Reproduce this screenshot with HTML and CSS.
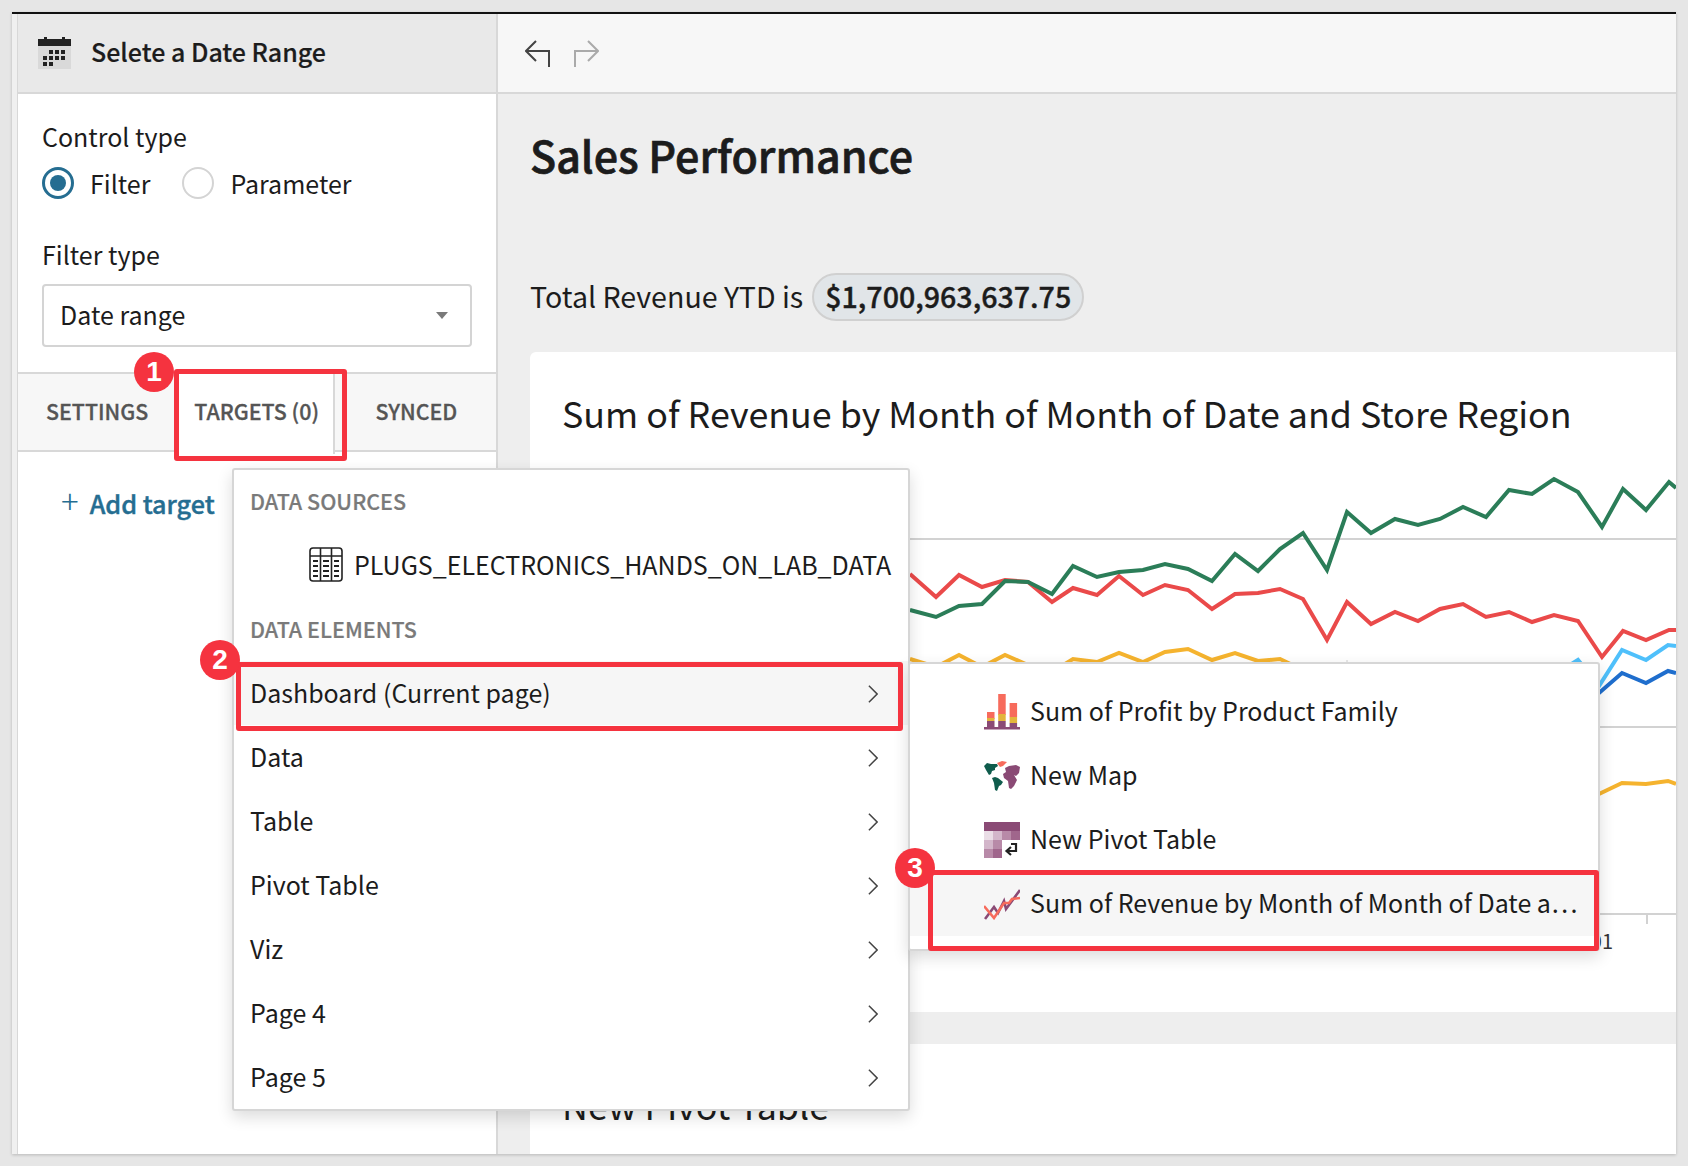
FILE: index.html
```html
<!DOCTYPE html>
<html lang="en">
<head>
    <meta charset="UTF-8">
    <title>Selete a Date Range</title>
    <link rel="stylesheet" href="styles.css">
</head>
<body>
<div class="window">
    <div class="strip"></div>

    <!-- left panel -->
    <div class="sidebar">
        <div class="sideHead">
            <svg class="calIcon" width="33" height="32" viewBox="0 0 33 32">
                <rect x="0" y="8" width="33" height="24" fill="#d9d9d9"/>
                <rect x="0" y="2" width="33" height="7" fill="#222"/>
                <rect x="6" y="0" width="3" height="3" fill="#222"/><rect x="24" y="0" width="3" height="3" fill="#222"/>
                <g fill="#222">
                    <rect x="11" y="13" width="4" height="4"/><rect x="17" y="13" width="4" height="4"/><rect x="23" y="13" width="4" height="4"/>
                    <rect x="5" y="19" width="4" height="4"/><rect x="11" y="19" width="4" height="4"/><rect x="17" y="19" width="4" height="4"/><rect x="23" y="19" width="4" height="4"/>
                    <rect x="5" y="25" width="4" height="4"/><rect x="11" y="25" width="4" height="4"/>
                </g>
            </svg>
            <span>Selete a Date Range</span>
        </div>
        <div class="sideForm">
            <div class="fieldLabel">Control type</div>
            <div class="radios">
                <span class="radio on"></span><span class="radioText">Filter</span>
                <span class="radio"></span><span class="radioText">Parameter</span>
            </div>
            <div class="fieldLabel typeLabel">Filter type</div>
            <div class="select">
                <span class="selectText">Date range</span>
                <span class="caret"></span>
            </div>
        </div>
        <div class="tabs">
            <div class="tab">SETTINGS</div>
            <div class="tab active">TARGETS (0)</div>
            <div class="tab">SYNCED</div>
        </div>
        <div class="addTarget"><span class="plus">+</span>Add target</div>
    </div>

    <!-- dashboard side -->
    <div class="main">
        <div class="toolbar">
            <svg width="26" height="27" viewBox="0 0 26 27" fill="none" stroke="#444" stroke-width="2">
                <path d="M11 1 L1 11 L11 21 M1 11 H24 V27"/>
            </svg>
            <svg width="26" height="27" viewBox="0 0 26 27" fill="none" stroke="#aaa" stroke-width="2">
                <path d="M15 1 L25 11 L15 21 M25 11 H2 V27"/>
            </svg>
        </div>
        <div class="canvas">
            <h1 class="pageTitle">Sales Performance</h1>
            <div class="kpi"><span class="kpiText">Total Revenue YTD is</span> <span class="pill">$1,700,963,637.75</span></div>
            <div class="card chartCard">
                <div class="cardTitle">Sum of Revenue by Month of Month of Date and Store Region</div>
                <svg class="chart" width="1146" height="520" viewBox="530 450 1146 520">
                    <g stroke="#d2d2d2" stroke-width="2">
                        <line x1="563" y1="539" x2="1676" y2="539"/>
                        <line x1="563" y1="727" x2="1676" y2="727"/>
                        <line x1="563" y1="914" x2="1676" y2="914"/>
                        <line x1="1647" y1="914" x2="1647" y2="924"/>
                        <line x1="1347" y1="660" x2="1347" y2="670" stroke-width="1"/>
                    </g>
                    <g fill="none" stroke-width="4" stroke-linejoin="miter">
                        <polyline stroke="#f5b32e" points="910,659 936,667 959,655 982,667 1005,655 1028,665 1052,672 1073,659 1097,662 1119,653 1143,662 1165,652 1188,649 1212,660 1235,653 1258,661 1280,659 1303,670 1578,805 1599,794 1622,783 1646,784 1668,781 1676,784"/>
                        <polyline stroke="#4fc0fb" points="1554,675 1578,660 1599,686 1622,650 1646,660 1668,645 1676,646"/>
                        <polyline stroke="#1f6ecd" points="1578,710 1599,693 1622,673 1646,683 1668,671 1676,673"/>
                        <polyline stroke="#ea4a4a" points="910,574 936,597 959,575 982,587 1005,580 1028,582 1052,602 1073,588 1097,595 1119,576 1143,595 1165,585 1188,590 1212,609 1235,594 1258,593 1280,589 1303,599 1327,640 1347,602 1371,624 1395,612 1418,621 1440,609 1463,604 1486,617 1509,612 1532,622 1554,615 1578,621 1602,657 1623,631 1646,640 1669,630 1676,630"/>
                        <polyline stroke="#2b7d58" points="910,610 936,617 959,606 982,604 1005,581 1028,582 1052,594 1073,566 1097,577 1119,572 1143,570 1165,564 1188,569 1212,581 1235,554 1258,571 1280,549 1303,533 1327,570 1347,512 1371,533 1395,519 1418,525 1440,519 1463,507 1486,517 1509,490 1532,494 1554,479 1578,492 1602,527 1623,489 1646,510 1669,482 1676,488"/>
                    </g>
                    <text class="axisText" x="1613" y="949" text-anchor="end">2001</text>
                </svg>
            </div>
            <div class="card pivotCard">
                <div class="cardTitle">New Pivot Table</div>
                <div class="pivotLine"></div>
            </div>
        </div>
    </div>
</div>

<!-- target menu -->
<div class="menu targetMenu">
    <div class="menuHead">DATA SOURCES</div>
    <div class="sourceRow">
        <svg width="34" height="35" viewBox="0 0 34 35" fill="none" stroke="#222" stroke-width="1.6">
            <rect x="1" y="1" width="32" height="33" rx="3"/>
            <path d="M1 9 H33 M11.5 1 V34 M22.5 1 V34"/>
            <path d="M4 14 H9 M14 14 H20 M25 14 H30 M4 19 H9 M14 19 H20 M25 19 H30 M4 24 H9 M14 24 H20 M25 24 H30 M4 29 H9 M14 29 H20 M25 29 H30" stroke-width="1.8"/>
        </svg>
        <span>PLUGS_ELECTRONICS_HANDS_ON_LAB_DATA</span>
    </div>
    <div class="menuHead">DATA ELEMENTS</div>
    <div class="menuRow hover">Dashboard (Current page)<svg class="chev" width="10" height="18" viewBox="0 0 12 22"><path d="M1 1 L11 11 L1 21"/></svg></div>
    <div class="menuRow">Data<svg class="chev" width="10" height="18" viewBox="0 0 12 22"><path d="M1 1 L11 11 L1 21"/></svg></div>
    <div class="menuRow">Table<svg class="chev" width="10" height="18" viewBox="0 0 12 22"><path d="M1 1 L11 11 L1 21"/></svg></div>
    <div class="menuRow">Pivot Table<svg class="chev" width="10" height="18" viewBox="0 0 12 22"><path d="M1 1 L11 11 L1 21"/></svg></div>
    <div class="menuRow">Viz<svg class="chev" width="10" height="18" viewBox="0 0 12 22"><path d="M1 1 L11 11 L1 21"/></svg></div>
    <div class="menuRow">Page 4<svg class="chev" width="10" height="18" viewBox="0 0 12 22"><path d="M1 1 L11 11 L1 21"/></svg></div>
    <div class="menuRow">Page 5<svg class="chev" width="10" height="18" viewBox="0 0 12 22"><path d="M1 1 L11 11 L1 21"/></svg></div>
</div>

<!-- sub menu -->
<div class="menu subMenu">
    <div class="subRow">
        <svg width="36" height="36" viewBox="0 0 36 36">
            <g fill="#f76b5c"><rect x="3" y="18" width="7.5" height="7"/><rect x="14.2" y="0" width="7.5" height="21"/><rect x="25.6" y="9" width="7.5" height="14"/></g>
            <g fill="#e3b53c"><rect x="3" y="24" width="7.5" height="3"/><rect x="14.2" y="20" width="7.5" height="7"/><rect x="25.6" y="23" width="7.5" height="6"/></g>
            <g fill="#8a4a75"><rect x="3" y="27" width="7.5" height="7"/><rect x="14.2" y="27" width="7.5" height="7"/><rect x="25.6" y="29" width="7.5" height="5"/><rect x="0" y="33" width="36" height="2.5"/></g>
        </svg>
        <span>Sum of Profit by Product Family</span>
    </div>
    <div class="subRow">
        <svg width="36" height="31" viewBox="0 0 36 31">
            <path fill="#0f5c4c" d="M0 5 L3 2 L7 3 L13 3 L14 5 L11 7 L11 9 L8 10 L7 13 L5 14 L2 9 Z M8 17 L11 16 L14 17 L19 21 L17 24 L15 25 L13 30 L11 29 L10 22 Z"/>
            <path fill="#f76b5c" d="M13 2 L18 0 L23 1 L19 5 L16 6 Z"/>
            <path fill="#8a4a75" d="M21 7 L25 5 L32 4 L36 6 L35 12 L32 15 L30 14 L33 19 L30 25 L27 28 L25 27 L24 20 L20 17 L19 13 L22 11 Z"/>
        </svg>
        <span>New Map</span>
    </div>
    <div class="subRow">
        <svg width="36" height="36" viewBox="0 0 36 36">
            <rect x="0" y="0" width="36" height="9" fill="#8a4a75"/>
            <rect x="0" y="9" width="9" height="9" fill="#eadde6"/><rect x="9" y="9" width="9" height="9" fill="#d3b6ca"/><rect x="18" y="9" width="9" height="9" fill="#b88aa8"/><rect x="27" y="9" width="9" height="9" fill="#a0668c"/>
            <rect x="0" y="18" width="9" height="9" fill="#d3b6ca"/><rect x="9" y="18" width="9" height="9" fill="#b88aa8"/>
            <rect x="0" y="27" width="9" height="9" fill="#b88aa8"/><rect x="9" y="27" width="9" height="9" fill="#a0668c"/>
            <path d="M27 22 H32 V29 H23 M27 25 L22.5 29 L27 33" fill="none" stroke="#222" stroke-width="2.2"/>
        </svg>
        <span>New Pivot Table</span>
    </div>
    <div class="subRow hover">
        <svg width="36" height="31" viewBox="0 0 36 31" fill="none" stroke-width="2.6">
            <path stroke="#8a4a75" d="M1 30 L10 18 L14 24 L20 12 L22 20 L36 1"/>
            <path stroke="#f76b5c" d="M0 17 L10 29 L20 14 L25 14 L28 10 L36 9"/>
        </svg>
        <span>Sum of Revenue by Month of Month of Date a…</span>
    </div>
</div>

<!-- red call-outs -->
<div class="redBox boxOne"></div>
<div class="redBox boxTwo"></div>
<div class="redBox boxThree"></div>
<div class="badge badgeOne">1</div>
<div class="badge badgeTwo">2</div>
<div class="badge badgeThree">3</div>
</body>
</html>
```

FILE: styles.css
```css
* { box-sizing: border-box; }
html, body { margin: 0; padding: 0; }
body {
    width: 1688px; height: 1166px;
    padding: 12px 12px 12px 12px;
    background-color: #e6e6e6;
    font-family: "Noto Sans CJK SC", "Source Sans Pro", "Noto Sans", sans-serif;
    font-size: 25px;
    color: #1c1c1c;
    overflow: hidden;
    position: relative;
}

.window {
    display: flex;
    height: 1142px;
    border-top: 2px solid #111;
    overflow: hidden;
    box-shadow: 0 1px 3px rgba(0,0,0,.2);
}
.strip { width: 6px; background-color: #f0f0f0; border-right: 1px solid #d8d8d8; flex-shrink: 0; }

/* left panel */
.sidebar {
    width: 480px;
    flex-shrink: 0;
    background-color: #fff;
    border-right: 2px solid #d8d8d8;
}
.sideHead {
    display: flex; align-items: center;
    height: 80px;
    padding-left: 20px;
    background-color: #e9e9e9;
    border-bottom: 2px solid #d8d8d8;
    font-weight: 500;
    -webkit-text-stroke: 0.2px;
}
.sideHead span { margin-bottom: 4px; }
.calIcon { margin-right: 20px; }

.sideForm { padding: 22px 24px 0 24px; height: 278px; }
.fieldLabel { line-height: 40px; }
.typeLabel { margin-top: 31px; }
.radios { display: flex; align-items: center; height: 40px; margin-top: 7px; }
.radio {
    width: 32px; height: 32px;
    border: 2px solid #d4d4d4; border-radius: 50%;
    background-color: #fff;
    flex-shrink: 0;
}
.radio.on { border: 3px solid #256d91; }
.radio.on::after {
    content: ""; display: block;
    width: 16px; height: 16px; margin: 5px;
    border-radius: 50%;
    background-color: #256d91;
}
.radioText { margin-left: 16px; margin-right: 32px; }
.select {
    display: flex; align-items: center; justify-content: space-between;
    height: 63px;
    margin-top: 10px;
    padding: 0 22px 0 16px;
    border: 2px solid #d4d4d4; border-radius: 4px;
}
.selectText { margin-bottom: 4px; }
.caret {
    width: 0; height: 0;
    border-left: 6px solid transparent;
    border-right: 6px solid transparent;
    border-top: 7px solid #7a7a7a;
}

.tabs {
    display: flex;
    height: 80px;
    background-color: #f7f7f7;
    border-top: 2px solid #d8d8d8;
    border-bottom: 2px solid #d8d8d8;
    font-size: 21.4px;
    font-weight: 500;
    -webkit-text-stroke: 0.3px;
    color: #555;
}
.tab { line-height: 74px; padding-left: 28px; width: 163px; }
.tab.active {
    width: 157px; padding-left: 15px;
    background-color: #fff;
    height: 80px;
    border-right: 2px solid #d8d8d8;
}
.tab:last-child { padding-left: 41px; }
.addTarget {
    margin: 26px 0 0 43px;
    line-height: 44px;
    color: #256d91;
    font-weight: 500;
    -webkit-text-stroke: 0.4px;
    font-size: 25.2px;
}
.plus { font-weight: 300; font-size: 33px; margin-right: 11px; -webkit-text-stroke: 0; }

/* right side */
.main { flex: 1; display: flex; flex-direction: column; min-width: 0; }
.toolbar {
    display: flex; align-items: center; gap: 22px;
    height: 80px;
    padding: 0 0 0 27px;
    background-color: #f7f7f7;
    border-bottom: 2px solid #d8d8d8;
}
.canvas { flex: 1; background-color: #eee; padding-left: 32px; overflow: hidden; }
.pageTitle {
    margin: 0; padding-top: 28px;
    font-size: 43px; font-weight: 500; line-height: 64px;
    -webkit-text-stroke: 0.7px;
}
.kpi {
    display: flex; align-items: center; gap: 9px;
    margin-top: 87px;
    height: 48px;
    font-size: 28.6px;
}
.kpiText { margin-bottom: 4px; }
.pill {
    display: inline-block;
    height: 48px; line-height: 42px;
    padding: 0 11px;
    background-color: #e1e5e8;
    border: 2px solid #d0d0d0; border-radius: 24px;
    font-weight: 500;
    -webkit-text-stroke: 0.4px;
}
.card { background-color: #fff; border-top-left-radius: 6px; }
.chartCard { height: 660px; margin-top: 31px; position: relative; }
.pivotCard { height: 113px; margin-top: 32px; padding-top: 34px; overflow: hidden; }
.cardTitle { padding-left: 32px; font-size: 35.8px; line-height: 52px; }
.chartCard .cardTitle { padding-top: 34px; }
.pivotLine { height: 2px; margin: 25px 0 0 33px; background-color: #d2d2d2; }
.chart { position: absolute; left: 0; top: 98px; display: block; }
.axisText { font-size: 20px; fill: #333; }

/* menus */
.menu {
    position: absolute;
    background-color: #fff;
    border: 2px solid #d6d6d6;
    border-radius: 3px;
    box-shadow: 0 6px 16px rgba(0,0,0,.14);
}
.targetMenu { left: 232px; top: 468px; width: 678px; height: 643px; }
.menuHead {
    padding-left: 16px;
    font-size: 21.5px; font-weight: 500; line-height: 32px;
    -webkit-text-stroke: 0.2px;
    color: #7a7a7a;
}
.targetMenu .menuHead:first-child { margin-top: 15px; }
.sourceRow {
    display: flex; align-items: center;
    height: 64px;
    margin: 15px 0 17px 0;
    padding-left: 75px;
}
.sourceRow svg { margin-right: 11px; flex-shrink: 0; }
.menuRow {
    display: flex; align-items: center; justify-content: space-between;
    height: 64px;
    padding: 0 30px 2px 16px;
}
.targetMenu .menuHead + .menuRow { margin-top: 16px; }
.hover { background-color: #f6f6f6; }
.chev { fill: none; stroke: #444; stroke-width: 1.8; margin-top: 4px; }

.subMenu { left: 908px; top: 662px; width: 692px; height: 289px; padding-top: 16px; }
.subRow {
    display: flex; align-items: center;
    height: 64px;
    padding-left: 74px;
    white-space: nowrap;
}
.subRow span { margin-bottom: 4px; }
.subRow svg { margin-right: 10px; flex-shrink: 0; }

/* call-outs */
.redBox {
    position: absolute;
    border: 5px solid #f5333f;
    border-radius: 3px;
}
.boxOne { left: 174px; top: 369px; width: 173px; height: 92px; }
.boxTwo { left: 236px; top: 662px; width: 667px; height: 69px; }
.boxThree { left: 928px; top: 870px; width: 671px; height: 81px; }
.badge {
    position: absolute;
    width: 40px; height: 40px;
    border-radius: 50%;
    background-color: #f5333f;
    color: #fff;
    font-family: "Liberation Sans", sans-serif;
    font-size: 28px; font-weight: 700;
    line-height: 40px;
    text-align: center;
}
.badgeOne { left: 134px; top: 352px; }
.badgeTwo { left: 200px; top: 640px; }
.badgeThree { left: 895px; top: 848px; }
```
